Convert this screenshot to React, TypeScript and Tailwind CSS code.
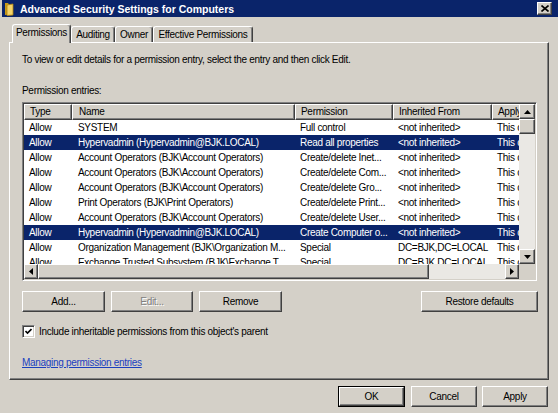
import type { ReactNode } from 'react'

const raised =
  'border border-t-white border-l-white border-r-[#404040] border-b-[#404040] shadow-[inset_-1px_-1px_0_#808080]'
const sunken =
  'border border-t-[#808080] border-l-[#808080] border-r-white border-b-white shadow-[inset_1px_1px_0_#404040,inset_-1px_-1px_0_#d4d0c8]'

interface Row {
  name: string
  perm: string
  from: string
  selected?: boolean
}

const rows: Row[] = [
  { name: 'SYSTEM', perm: 'Full control', from: '<not inherited>' },
  { name: 'Hypervadmin (Hypervadmin@BJK.LOCAL)', perm: 'Read all properties', from: '<not inherited>', selected: true },
  { name: 'Account Operators (BJK\\Account Operators)', perm: 'Create/delete Inet...', from: '<not inherited>' },
  { name: 'Account Operators (BJK\\Account Operators)', perm: 'Create/delete Com...', from: '<not inherited>' },
  { name: 'Account Operators (BJK\\Account Operators)', perm: 'Create/delete Gro...', from: '<not inherited>' },
  { name: 'Print Operators (BJK\\Print Operators)', perm: 'Create/delete Print...', from: '<not inherited>' },
  { name: 'Account Operators (BJK\\Account Operators)', perm: 'Create/delete User...', from: '<not inherited>' },
  { name: 'Hypervadmin (Hypervadmin@BJK.LOCAL)', perm: 'Create Computer o...', from: '<not inherited>', selected: true },
  { name: 'Organization Management (BJK\\Organization M...', perm: 'Special', from: 'DC=BJK,DC=LOCAL' },
  { name: 'Exchange Trusted Subsystem (BJK\\Exchange T...', perm: 'Special', from: 'DC=BJK,DC=LOCAL' },
]

function Arrow({ dir }: { dir: 'up' | 'down' | 'left' | 'right' }) {
  const d = {
    up: 'M3.5 0L7 4H0Z',
    down: 'M0 0H7L3.5 4Z',
    left: 'M4 0V7L0 3.5Z',
    right: 'M0 0L4 3.5L0 7Z',
  }[dir]
  const vertical = dir === 'up' || dir === 'down'
  return (
    <svg width={vertical ? 7 : 4} height={vertical ? 4 : 7} viewBox={vertical ? '0 0 7 4' : '0 0 4 7'}>
      <path d={d} fill="#000" />
    </svg>
  )
}

function ArrowBtn({ dir, className }: { dir: 'up' | 'down' | 'left' | 'right'; className: string }) {
  return (
    <div className={`${raised} ${className} flex shrink-0 items-center justify-center bg-[#d4d0c8]`}>
      <Arrow dir={dir} />
    </div>
  )
}

function Button({
  children,
  className,
  disabled,
  isDefault,
}: {
  children: ReactNode
  className: string
  disabled?: boolean
  isDefault?: boolean
}) {
  const face = (
    <div
      className={`${raised} flex h-full w-full items-center justify-center bg-[#d4d0c8] ${
        disabled ? 'text-[#808080] [text-shadow:1px_1px_0_#fff]' : ''
      }`}
    >
      {children}
    </div>
  )
  if (isDefault) {
    return <div className={`${className} h-[21px] border border-black`}>{face}</div>
  }
  return <div className={`${className} h-[21px]`}>{face}</div>
}

function FolderIcon() {
  return (
    <svg width="10" height="14" viewBox="0 0 10 14">
      <path d="M1 1H4L5 2.5V12.5L1 13Z" fill="#c89a18" />
      <path d="M3 3L9 2V13L3 13.5Z" fill="#f4d46a" stroke="#b08410" strokeWidth="0.8" />
    </svg>
  )
}

function CloseButton() {
  return (
    <div className={`${raised} flex h-[13px] w-[15px] items-center justify-center bg-[#d4d0c8]`}>
      <svg width="8" height="7" viewBox="0 0 8 7">
        <path d="M0.5 0.5L7.5 6.5M7.5 0.5L0.5 6.5" stroke="#000" strokeWidth="1.6" />
      </svg>
    </div>
  )
}

function Tab({ label, active, className }: { label: string; active?: boolean; className: string }) {
  return (
    <div
      className={`${className} flex items-center justify-center rounded-t-[3px] border border-b-0 border-t-white border-l-white border-r-[#404040] bg-[#d4d0c8] shadow-[inset_-1px_0_0_#808080] ${
        active ? 'relative z-10 -mb-[1px] h-[19px] pb-[2px]' : 'h-[16px]'
      }`}
    >
      {label}
    </div>
  )
}

function PermissionList() {
  const cols = ['w-[48px] pl-[5px]', 'w-[223px] pl-[6px]', 'w-[98px] pl-[5px]', 'w-[99px] pl-[5px]', 'w-[60px] pl-[5px]']
  return (
    <div className={`${sunken} flex h-[179px] w-[515px] bg-white p-[1px]`}>
      <div className="flex min-w-0 flex-1 flex-col">
        <div className="flex h-[16px] shrink-0 overflow-hidden bg-[#d4d0c8]">
          {['Type', 'Name', 'Permission', 'Inherited From', 'Apply To'].map((h, i) => (
            <div
              key={h}
              className={`${cols[i]} ${raised} flex h-full shrink-0 items-center overflow-hidden whitespace-nowrap`}
            >
              {h}
            </div>
          ))}
        </div>
        <div className="min-h-0 flex-1 overflow-hidden">
          {rows.map((r, i) => (
            <div
              key={i}
              className={`flex h-[15px] items-center whitespace-nowrap ${
                r.selected ? 'bg-[#0a246a] text-white' : ''
              }`}
            >
              <div className={`${cols[0]} shrink-0 overflow-hidden`}>Allow</div>
              <div className={`${cols[1]} shrink-0 overflow-hidden`}>{r.name}</div>
              <div className={`${cols[2]} shrink-0 overflow-hidden`}>{r.perm}</div>
              <div className={`${cols[3]} shrink-0 overflow-hidden`}>{r.from}</div>
              <div className={`${cols[4]} shrink-0 overflow-hidden`}>This object only</div>
            </div>
          ))}
        </div>
        <div className="flex h-[15px] shrink-0 bg-[#eae8e4]">
          <ArrowBtn dir="left" className="h-[15px] w-[14px]" />
          <div className={`${raised} h-[15px] w-[391px] bg-[#d4d0c8]`} />
          <div className="flex-1" />
          <ArrowBtn dir="right" className="h-[15px] w-[14px]" />
        </div>
      </div>
      <div className="flex w-[16px] shrink-0 flex-col">
        <div className="flex flex-1 flex-col bg-[#eae8e4]">
          <ArrowBtn dir="up" className="h-[15px] w-[16px]" />
          <div className={`${raised} h-[15px] w-[16px] bg-[#d4d0c8]`} />
          <div className="flex-1" />
          <ArrowBtn dir="down" className="h-[15px] w-[16px]" />
        </div>
        <div className="h-[15px] bg-[#d4d0c8]" />
      </div>
    </div>
  )
}

export default function App() {
  return (
    <div className="flex h-[413px] w-[558px] flex-col overflow-hidden bg-[#d4d0c8] font-['Liberation_Sans',Arial,sans-serif] text-[10px] leading-[12px] tracking-[-0.3px] text-black">
      <div className="ml-[2px] flex h-[17px] shrink-0 items-center bg-[#0a246a] pl-[2px] pr-[6px]">
        <FolderIcon />
        <span className="ml-[6px] text-[10.5px] font-bold tracking-normal text-white">
          Advanced Security Settings for Computers
        </span>
        <div className="ml-auto">
          <CloseButton />
        </div>
      </div>

      <div className="mt-[7px] flex h-[18px] shrink-0 items-end pl-[12px]">
        <Tab label="Permissions" active className="w-[59px]" />
        <Tab label="Auditing" className="w-[44px]" />
        <Tab label="Owner" className="w-[38px]" />
        <Tab label="Effective Permissions" className="w-[100px]" />
      </div>

      <div className={`${raised} ml-[9px] flex h-[338px] w-[540px] shrink-0 flex-col pl-[12px] pr-[10px] pt-[11px]`}>
        <p>To view or edit details for a permission entry, select the entry and then click Edit.</p>
        <p className="mt-[19px]">Permission entries:</p>
        <div className="mt-[5px]">
          <PermissionList />
        </div>
        <div className="mt-[10px] flex">
          <Button className="w-[83px]">Add...</Button>
          <Button className="ml-[6px] w-[82px]" disabled>
            Edit...
          </Button>
          <Button className="ml-[6px] w-[83px]">Remove</Button>
          <Button className="ml-auto w-[117px]">Restore defaults</Button>
        </div>
        <label className="mt-[13px] flex items-center">
          <span className={`${sunken} flex h-[13px] w-[13px] items-center justify-center bg-white`}>
            <svg width="7" height="7" viewBox="0 0 7 7">
              <path d="M0.5 3L2.5 5L6.5 1" stroke="#000" strokeWidth="1.6" fill="none" />
            </svg>
          </span>
          <span className="ml-[4px]">Include inheritable permissions from this object's parent</span>
        </label>
        <a className="mt-[19px] self-start text-[#1a3fc0] underline">Managing permission entries</a>
      </div>

      <div className="mt-[6px] flex shrink-0 justify-end pr-[10px]">
        <Button className="w-[67px]" isDefault>
          OK
        </Button>
        <Button className="ml-[6px] w-[66px]">Cancel</Button>
        <Button className="ml-[5px] w-[66px]">Apply</Button>
      </div>
    </div>
  )
}
